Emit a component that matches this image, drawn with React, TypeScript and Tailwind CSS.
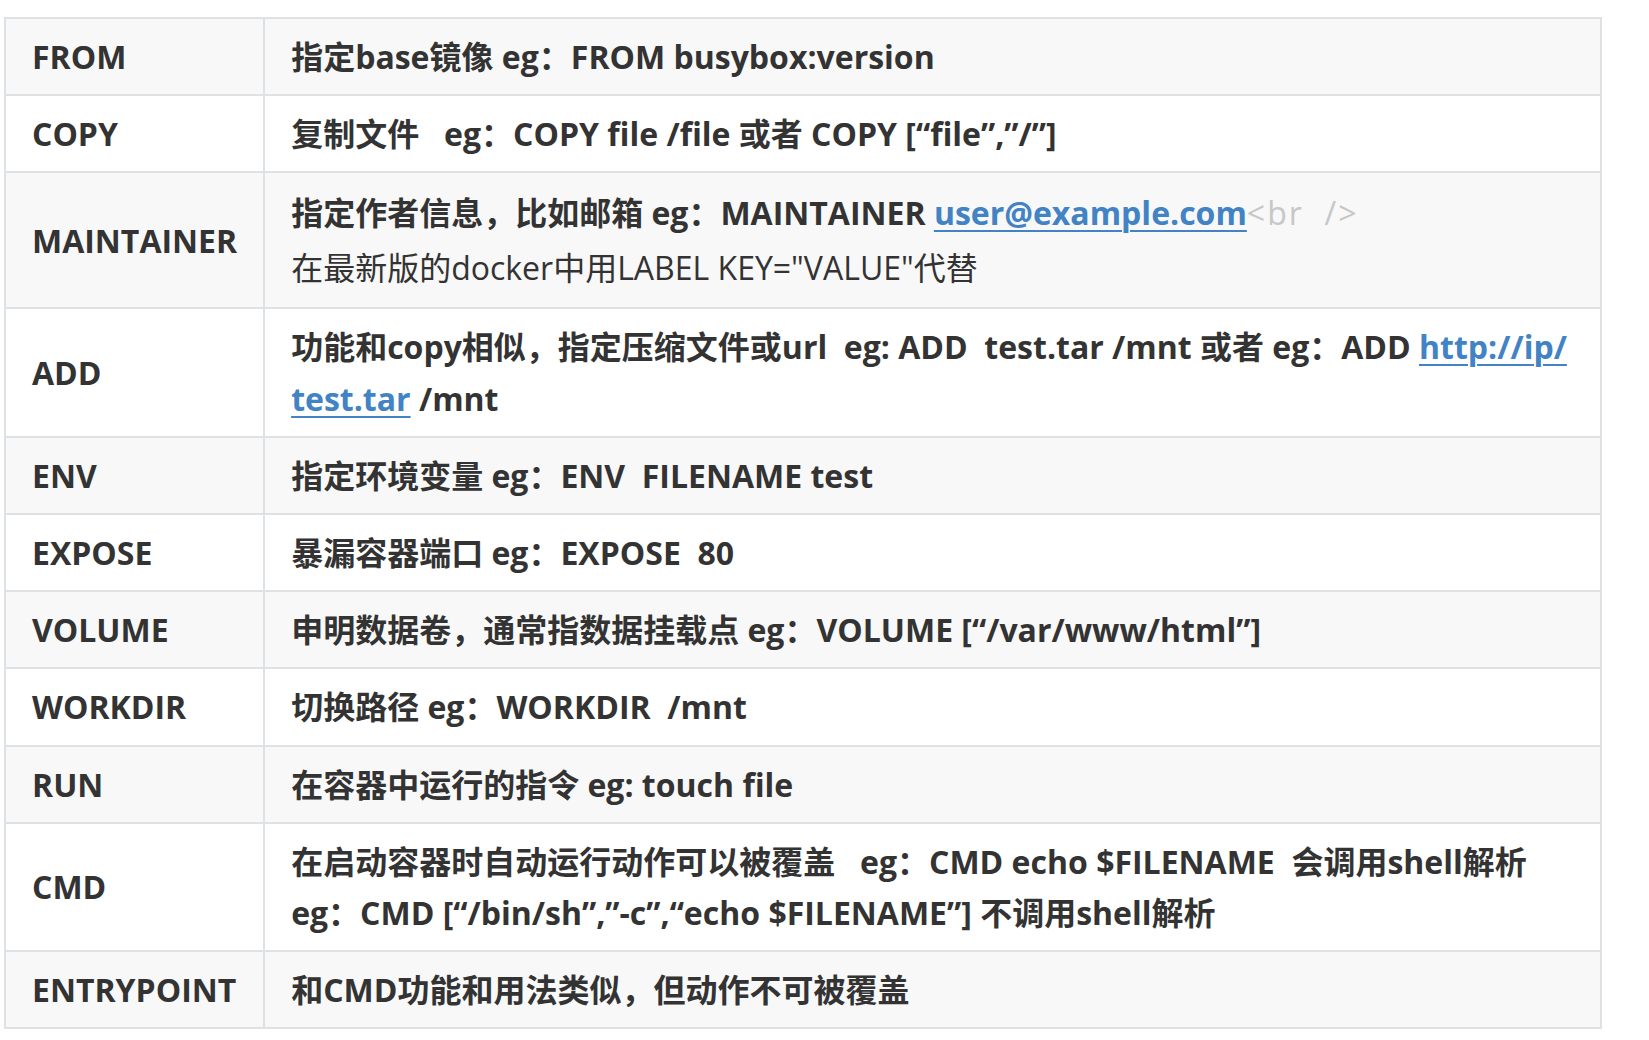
const font = '[font-family:"Open_Sans","Noto_Sans_CJK_SC",sans-serif]';

type Row = { key: string; body: React.ReactNode; tall?: boolean };

const link = 'text-[#4183c4] underline decoration-2 underline-offset-[5px]';

const rows: Row[] = [
  { key: 'FROM', body: '指定base镜像 eg：FROM busybox:version' },
  { key: 'COPY', body: '复制文件   eg：COPY file /file 或者 COPY [“file”,”/”]' },
  {
    key: 'MAINTAINER',
    tall: true,
    body: (
      <>
        指定作者信息，比如邮箱 eg：MAINTAINER <a className={link}>user@example.com</a>
        <span className="font-normal tracking-[2px] text-[#c7c7c7]">{'<br  />'}</span>
        <br />
        <span className="font-normal">在最新版的docker中用LABEL KEY="VALUE"代替</span>
      </>
    ),
  },
  {
    key: 'ADD',
    body: (
      <>
        功能和copy相似，指定压缩文件或url  eg: ADD  test.tar /mnt 或者 eg：ADD{' '}
        <a className={link}>
          http://ip/
          <wbr />
          test.tar
        </a>{' '}
        /mnt
      </>
    ),
  },
  { key: 'ENV', body: '指定环境变量 eg：ENV  FILENAME test' },
  { key: 'EXPOSE', body: '暴漏容器端口 eg：EXPOSE  80' },
  { key: 'VOLUME', body: '申明数据卷，通常指数据挂载点 eg：VOLUME [“/var/www/html”]' },
  { key: 'WORKDIR', body: '切换路径 eg：WORKDIR  /mnt' },
  { key: 'RUN', body: '在容器中运行的指令 eg: touch file' },
  {
    key: 'CMD',
    body: (
      <>
        在启动容器时自动运行动作可以被覆盖   eg：CMD echo $FILENAME  会调用shell解析
        <br />
        eg：CMD [“/bin/sh”,”-c”,“echo $FILENAME”] 不调用shell解析
      </>
    ),
  },
  { key: 'ENTRYPOINT', body: '和CMD功能和用法类似，但动作不可被覆盖' },
];

export default function App() {
  return (
    <div className={`min-h-screen bg-white pt-[17px] pl-1 ${font}`}>
      <table className="w-[1598px] border-collapse text-[32px] leading-[51.2px] font-bold text-[#333]">
        <tbody>
          {rows.map((r, i) => (
            <tr key={r.key} className={i % 2 === 0 ? 'bg-[#f8f8f8]' : 'bg-white'}>
              <td className="w-[259px] border-2 border-[#dfe2e5] px-[26px] py-3 align-middle">{r.key}</td>
              <td
                className={`border-2 border-[#dfe2e5] px-[26px] py-3 whitespace-pre-wrap align-middle ${
                  r.tall ? 'leading-[55px]' : ''
                }`}>
                {r.body}
              </td>
            </tr>
          ))}
        </tbody>
      </table>
    </div>
  );
}
